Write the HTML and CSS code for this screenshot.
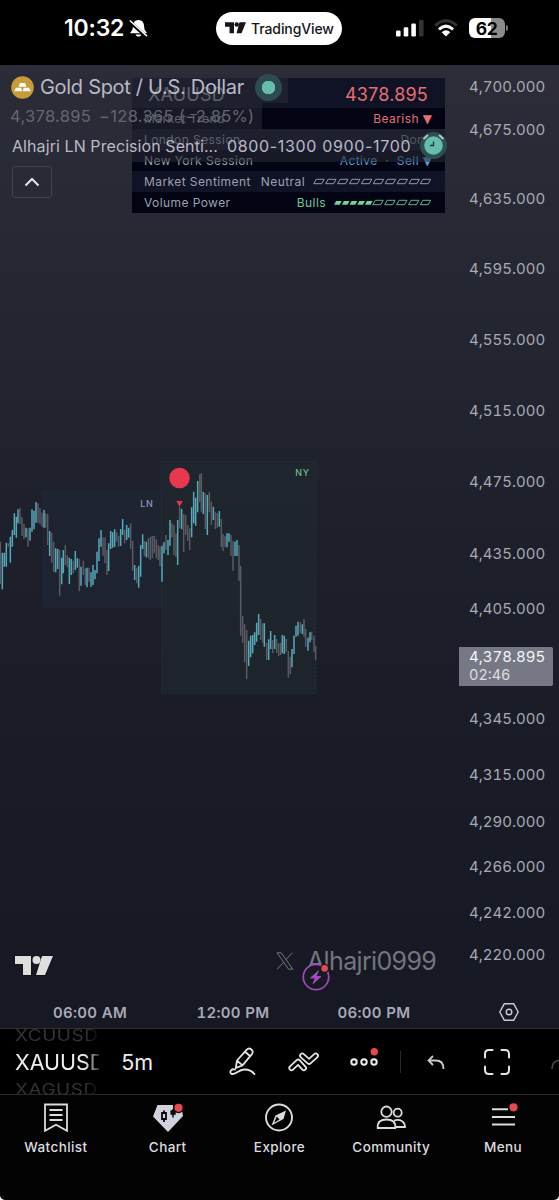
FILE: index.html
```html
<!DOCTYPE html>
<html lang="en">
<head>
<meta charset="utf-8">
<title>XAUUSD chart</title>
<link rel="stylesheet" href="styles.css">
</head>
<body>
<div class="phone">
  <header class="status">
    <div class="clock"><span class="time">10:32</span>
      <svg class="bell" viewBox="0 0 20 20"><path d="M10 1C6 1 4.300 4 4.100 7.500c-.1 3-.6 4.500-2.600 6.500v1h17v-1c-2-2-2.500-3.500-2.600-6.500C15.700 4 14 1 10 1zM7 16.200h6c-.5 3-5.500 3-6 0z" fill="#fff"/><path d="M-.2 2 19 19.200" stroke="#000" stroke-width="3.600"/><path d="M.8 1.500 19 18" stroke="#fff" stroke-width="1.500"/></svg>
    </div>
    <div class="island">
      <svg width="21" height="12" viewBox="0 0 42 23"><path d="M0 0h18v22H9V9H0zM29 0h13l-9 22H23z" fill="#15161c"/><circle cx="23.500" cy="4.500" r="4.500" fill="#15161c"/></svg>
      <span class="brand">TradingView</span>
    </div>
    <div class="signals">
      <svg width="28" height="18" viewBox="0 0 28 18"><g fill="#fff"><rect x="0" y="11.500" width="4.600" height="6" rx="1.300"/><rect x="7.700" y="8.200" width="4.600" height="9.300" rx="1.300"/><rect x="15.300" y="4.500" width="4.600" height="13" rx="1.300"/></g><rect x="23" y="1" width="4.600" height="16.500" rx="1.300" fill="#333"/></svg>
      <svg class="wifi" width="24" height="18" viewBox="0 0 24 18" fill="none"><path d="M1.200 6.600Q12-3.200 22.800 6.600" stroke="#333" stroke-width="3"/><path d="M4.900 10.300Q12 4 19.100 10.300" stroke="#fff" stroke-width="3"/><path d="M7.700 13.200Q12 9.300 16.300 13.200L12 17.500z" fill="#fff"/></svg>
      <div class="battery"><span>62</span></div>
    </div>
  </header>

  <main class="chart">
    <svg class="plot" viewBox="0 0 960 750">
      <rect x="130" y="126" width="355" height="346" class="zone ln"/>
      <rect x="485" y="34" width="463" height="696" class="zone ny"/>
      <path class="bar down" d="M1 275V402M25 280V290M60 173V222M66 202V258M72 222V268M84 235V290M114 160V218M120 175V222M126 188V230M137 190V233M143 192V285M155 248V338M161 275V366M179 300V437M196 285V345M202 316V352M220 332V370M238 327V424M250 332V375M256 355V405M267 353V395M309 262V317M315 262V340M321 300V375M350 247V275M356 257V290M374 240V280M392 220V297M398 273V362M410 353V400M433 273V318M445 265V325M451 260V330M457 258V325M463 258V310M469 268V325M475 285V330M480 290V348M498 255V300M516 220V262M522 225V315M528 250V320M539 170V235M551 193V305M557 195V255M563 225V272M569 235V300M599 73V155M604 70V185M616 130V237M628 127V187M634 155V225M646 185V237M652 190V233M664 207V292M669 252V303M675 258V292M693 255V318M699 272V362M717 285V392M722 347V557M728 498V578M734 523V637M740 540V688M782 507V570M788 520V578M800 578V630M818 570V610M830 567V608M836 580V618M842 578V615M859 567V605M865 603V683M871 620V673M901 517V550M912 508V560M917 537V590M935 545V570M942 557V605M947 587V630"/>
      <path class="bar up" d="M7 308V418M13 308V350M19 278V350M31 260V338M37 240V290M43 190V255M49 200V263M54 178V220M78 233V262M90 233V272M96 178V245M102 182V238M108 156V218M132 180V233M149 243V318M167 295V367M173 297V357M185 323V403M190 300V370M208 323V402M214 327V375M226 303V360M232 325V353M243 350V407M261 353V412M273 367V410M279 345V405M285 360V388M291 305V370M297 265V333M303 240V290M326 280V363M332 243V297M338 247V293M344 238V290M362 237V288M368 207V255M380 225V270M386 233V263M404 345V390M416 347V413M422 285V380M428 253V297M439 275V322M486 287V395M492 277V310M504 270V315M510 210V287M533 210V345M545 177V238M575 172V262M581 125V220M587 143V227M593 93V187M610 125V192M622 135V255M640 170V210M658 183V230M681 250V292M687 250V275M705 275V318M711 270V318M746 572V648M752 557V622M758 555V610M764 547V585M770 518V575M776 492V555M793 520V590M806 568V630M812 543V597M824 555V597M847 555V610M853 557V612M876 597V652M882 557V612M888 527V560M894 515V557M907 523V552M924 563V602M930 547V577"/>
      <circle cx="538.500" cy="84" r="31" fill="#e8384f"/>
      <path d="M529 153h19l-9.500 17z" fill="#e8384f"/>
      <text x="421" y="171" class="zt" fill="#8d9bbd">LN</text>
      <text x="886" y="79" class="zt" fill="#78b892">NY</text>
    </svg>

    <div class="panel">
      <div class="prow head"><span>XAUUSD</span><span class="red">4378.895</span></div>
      <div class="prow dark"><span>Market Trend</span><span class="red">Bearish <i>▼</i></span></div>
      <div class="prow"><span>London Session</span><span class="done">Done</span></div>
      <div class="prow dark"><span>New York Session</span><span class="blue">Active &nbsp;·&nbsp; Sell <i>▼</i></span></div>
      <div class="prow"><span>Market Sentiment</span><span class="meter">Neutral
        <svg width="118" height="7" viewBox="0 0 118 7"><defs><path id="cell" d="M3.300 1.300h7.900L8.700 5.700H.8z"/></defs><g fill="none" stroke="#a3a5b0" stroke-width=".9"><use href="#cell"/><use href="#cell" x="11.900"/><use href="#cell" x="23.800"/><use href="#cell" x="35.700"/><use href="#cell" x="47.600"/><use href="#cell" x="59.500"/><use href="#cell" x="71.400"/><use href="#cell" x="83.300"/><use href="#cell" x="95.200"/><use href="#cell" x="106.500"/></g></svg></span></div>
      <div class="prow dark"><span>Volume Power</span><span class="meter green">Bulls
        <svg width="97" height="7" viewBox="0 0 97 7"><g fill="#73d49b"><path d="M2.100 2H7.700L5.700 5.800H.1z"/><path id="full" d="M9.900 2h5.600l-2 3.800H7.900z"/><use href="#full" x="7.700"/><use href="#full" x="15.400"/><use href="#full" x="23.100"/></g><g fill="none" stroke="#73c497" stroke-width=".9"><use href="#cell" x="38"/><use href="#cell" x="49.900"/><use href="#cell" x="61.800"/><use href="#cell" x="73.700"/><use href="#cell" x="85.500"/></g></svg></span></div>
    </div>

    <section class="legend">
      <div class="lrow title">
        <svg class="gold" width="23" height="23" viewBox="0 0 23 23"><circle cx="11.500" cy="11.500" r="11.300" fill="#c99a38"/><path d="M9 7h5l1.500 3.700h-8zM5 11.700h5.200l1 3.600H3.200zM12.700 11.700H18l1.800 3.600h-8z" fill="#fff"/></svg>
        <span class="name">Gold Spot / U.S. Dollar</span><span class="live"></span>
      </div>
      <div class="lrow quote"><span>4,378.895</span><span>−128.365 (−2.85%)</span></div>
      <div class="lrow study"><span class="sname">Alhajri LN Precision Senti...</span><span class="hours">0800-1300 0900-1700</span>
        <svg class="alarm" width="27" height="27" viewBox="0 0 27 27"><circle cx="13.500" cy="13.500" r="13.500" fill="#2b4f53"/><circle cx="13.500" cy="13.500" r="9.300" fill="#66bda9"/><path d="M3.500 7 8 3M19 3l4.500 4" stroke="#b9c5c8" stroke-width="2"/><path d="M13.500 9.500v4h-3.500" fill="none" stroke="#234" stroke-width="1.300"/></svg></div>
      <button class="collapse"><svg width="16" height="10" viewBox="0 0 16 10"><path d="m1.500 8.500 6.500-6.500 6.500 6.500" fill="none" stroke="#e4e5ea" stroke-width="2"/></svg></button>
    </section>

    <div class="axis">
      <span style="top:87px">4,700.000</span><span style="top:130px">4,675.000</span><span style="top:199px">4,635.000</span><span style="top:269px">4,595.000</span><span style="top:340px">4,555.000</span><span style="top:411px">4,515.000</span><span style="top:482px">4,475.000</span><span style="top:554px">4,435.000</span><span style="top:609px">4,405.000</span><span style="top:719px">4,345.000</span><span style="top:775px">4,315.000</span><span style="top:822px">4,290.000</span><span style="top:867px">4,266.000</span><span style="top:913px">4,242.000</span><span style="top:955px">4,220.000</span>
      <div class="last"><b>4,378.895</b><em>02:46</em></div>
    </div>

    <svg class="logo" viewBox="0 0 42 24"><path d="M2 2h16v19h-8V10H2zM29 2h11l-8 19h-9z" fill="#dedede" stroke="#111216" stroke-width="2" paint-order="stroke"/><circle cx="23.500" cy="6" r="4" fill="#dedede"/></svg>
    <div class="mark"><svg width="18" height="18" viewBox="0 0 18 18" fill="none" stroke="#777880"><path d="M1 .8h4.200l11.600 16.400h-4.200zM16.300.8 10 7.600M7.700 10.200 1 17.200"/></svg><span>Alhajri0999</span></div>
    <svg class="flash" viewBox="0 0 28 28"><circle cx="14" cy="14" r="12.700" fill="#171923" stroke="#a24cba" stroke-width="1.700"/><path d="m16.500 7.800-8 7.200h5L11 20.700l8-7.200h-5z" fill="#a24cba" stroke="#b34ccc" stroke-width=".8" stroke-linejoin="round"/><circle cx="22.600" cy="5.400" r="4.700" fill="#171923"/><circle cx="22.600" cy="5.400" r="3.300" fill="#e5484f"/></svg>

    <footer class="times"><span>06:00 AM</span><span>12:00 PM</span><span>06:00 PM</span>
      <svg width="20" height="18" viewBox="0 0 20 18" fill="none" stroke="#c9cad0" stroke-width="1.400"><path d="M5.300.8h9.400L19.200 9l-4.500 8.200H5.300L.8 9z"/><circle cx="10" cy="9" r="2.800"/></svg></footer>
  </main>

  <section class="toolbar">
    <div class="wheel"><span class="dim">XCUUSD</span><span class="current">XAUUSD</span><span class="dim">XAGUSD</span></div>
    <span class="interval">5m</span>
    <svg class="t-pen" width="28" height="30" viewBox="0 0 28 30" fill="none" stroke="#e4e4e6" stroke-width="1.800" stroke-linecap="round" stroke-linejoin="round"><path d="m8 13.500 9.500-10.700c3-3.200 8.200.8 5.400 4.300L13.500 18.300 6.800 21zM8 13.700l5.300 4.400M16 4.800l5.300 4.400M6 22.500c-3.500-1-5.500 1.800-4.200 3.800 3 3.200 7.500-3.600 13.200-3.800 5-.2 8 1.500 10.500 4.600"/></svg>
    <svg class="t-pattern" width="31" height="20" viewBox="0 0 31 20" fill="none" stroke-linecap="round" stroke-linejoin="round"><path d="m14.300 3.700 6.800 6 6.600-6" stroke="#e4e4e6" stroke-width="6.200"/><path d="m14.300 3.700 6.800 6 6.600-6" stroke="#000" stroke-width="2.600"/><path d="m3.500 16 6.700-6.200 5.600 6.200" stroke="#e4e4e6" stroke-width="6.200"/><path d="m3.500 16 6.700-6.200 5.600 6.200" stroke="#000" stroke-width="2.600"/></svg>
    <svg class="t-more" width="29" height="19" viewBox="0 0 29 19"><g fill="none" stroke="#eee" stroke-width="2"><circle cx="4" cy="14" r="2.700"/><circle cx="14" cy="14" r="2.700"/><circle cx="24" cy="14" r="2.700"/></g><circle cx="24.300" cy="3.800" r="3.700" fill="#e5484f"/></svg>
    <i class="divider"></i>
    <svg class="t-undo" width="18" height="15" viewBox="0 0 18 15" fill="none" stroke="#c9cacf" stroke-width="1.800"><path d="M6 1 1.500 5.500 6 10M1.500 5.500H9c5 0 7.500 3 7.500 8.500"/></svg>
    <svg class="t-full" width="26" height="26" viewBox="0 0 26 26" fill="none" stroke="#e4e4e6" stroke-width="2" stroke-linecap="round"><path d="M1 8.500V5q0-4 4-4h3.500M17.500 1H21q4 0 4 4v3.500M25 17.500V21q0 4-4 4h-3.500M8.500 25H5q-4 0-4-4v-3.500"/></svg>
    <svg class="t-redo" width="8" height="10" viewBox="0 0 8 10" fill="none" stroke="#4d4d50" stroke-width="1.500"><path d="M1 10C1 5 3 1.800 8 1.200"/></svg>
  </section>

  <nav class="nav">
    <a><svg width="30" height="30" viewBox="0 0 30 30" fill="none" stroke="#dcdce0" stroke-width="1.800"><path d="M4 2.500h22v26.300l-11-6-11 6zM8.500 8h13M8.500 13h13M8.500 18h13"/></svg><span>Watchlist</span></a>
    <a><svg width="32" height="30" viewBox="0 0 32 30"><path d="M5.500 3h15.500v5h9l1 6L16 30 1 14.500z" fill="#d2d2df"/><path d="M10 11h4v6h-4zM12 8.500V11M12 17v3" fill="none" stroke="#08080a" stroke-width="1.800"/><path d="M21 7v8.500M19.200 9h3.800v3h-3.800z" fill="#08080a" stroke="#08080a" stroke-width="1.500"/><circle cx="26.500" cy="5.800" r="5.400" fill="#040404"/><circle cx="26.500" cy="5.800" r="4.100" fill="#e5484f"/></svg><span>Chart</span></a>
    <a><svg width="30" height="30" viewBox="0 0 30 30"><circle cx="15" cy="15.500" r="13" fill="none" stroke="#dcdce0" stroke-width="1.900"/><path d="M22 8.500 19.500 17l-12 6.500L11.500 13.500z" fill="#dcdce0"/><path d="m12.800 14.500-2.600 6.300 5.300-3.400z" fill="#050505"/></svg><span>Explore</span></a>
    <a><svg width="32" height="30" viewBox="0 0 32 30" fill="none" stroke="#dcdce0" stroke-width="1.800"><circle cx="11.500" cy="9.700" r="5.200"/><circle cx="22.700" cy="10.700" r="4"/><path d="M2.700 26c-.5-6 2.800-8.500 8.800-8.500s9.300 2.500 8.800 8.500zM19 18.500c6-2 11 1 11 6.500h-9"/></svg><span>Community</span></a>
    <a><svg width="32" height="30" viewBox="0 0 32 30"><path d="M5 7.300h16M5 15h23M5 22.500h23" stroke="#dcdce0" stroke-width="1.900"/><circle cx="26.500" cy="5.300" r="4.100" fill="#e5484f"/></svg><span>Menu</span></a>
  </nav>
</div>
</body>
</html>
```

FILE: styles.css
```css
* { box-sizing: border-box; }
body { margin: 0; background: #fff; font-family: Inter, "Liberation Sans", sans-serif; }
svg { display: block; flex: none; }
.phone { width: 559px; height: 1200px; overflow: hidden; display: flex; flex-direction: column; background: #030303; border-radius: 0 0 5px 5px; }

.status { height: 65px; flex: none; background: #000; display: flex; align-items: center; padding-bottom: 9px; color: #fff; }
.clock { width: 216px; display: flex; align-items: center; padding-left: 64px; gap: 4px; }
.time { font-size: 23px; font-weight: 600; letter-spacing: -.2px; width: 61px; white-space: nowrap; }
.bell { width: 19px; height: 19px; }
.island { width: 126px; height: 33px; border-radius: 17px; background: #fff; display: flex; align-items: center; padding-left: 9px; gap: 5px; color: #15161c; }
.brand { font-size: 14px; font-weight: 500; letter-spacing: -.1px; }
.signals { display: flex; align-items: center; padding-left: 54px; gap: 10px; }
.battery { width: 36px; height: 20px; margin-left: 1px; border-radius: 6px; background: linear-gradient(90deg, #fff 62%, #8b8b8b 62%); display: flex; justify-content: center; align-items: center; color: #000; font-size: 17.500px; font-weight: 700; letter-spacing: -.4px; position: relative; padding-right: 1px; }
.battery::after { content: ""; position: absolute; left: 37px; top: 7px; width: 2px; height: 6px; background: #777; border-radius: 0 2px 2px 0; }

.chart { position: relative; height: 963px; flex: none; background: linear-gradient(#2c2d38, #242632 25%, #1d1f2a 50%, #181a26 80%, #161824); }
.plot { position: absolute; left: 0; top: 385px; width: 320px; height: 250px; }
.zone { stroke-width: 2; stroke-dasharray: 7 5; }
.ln { fill: #1d2737; fill-opacity: .5; stroke: #28364b; }
.ny { fill: #202a2e; fill-opacity: .6; stroke: #2b3b3d; }
.bar { fill: none; stroke-width: 4.500; }
.up { stroke: #56a9b9; }
.down { stroke: #595a64; }
.zt { font-size: 27px; font-weight: 500; letter-spacing: 1.500px; }

.panel { position: absolute; left: 132px; top: 13px; width: 313px; color: #9fa1ad; font-size: 12px; letter-spacing: .42px; }
.prow { height: 21px; background: #101326; padding: 0 13px 0 12px; display: flex; align-items: center; justify-content: space-between; white-space: pre; }
.prow.dark { background: #020414; }
.prow.head { height: 30px; padding: 2px 17px 0 16px; font-size: 18px; letter-spacing: .2px; }
.prow i { font-style: normal; font-family: "DejaVu Sans", sans-serif; font-size: 12px; letter-spacing: 0; }
.red { color: #e66f73; } .blue { color: #5b9fda; } .green { color: #73c497; } .done { color: #85868e; }
.meter { display: flex; align-items: center; gap: 8px; white-space: nowrap; padding-right: 1px; }

.legend { position: relative; display: flex; flex-direction: column; align-items: flex-start; padding-top: 9px; width: 447px; }
.lrow { display: flex; align-items: center; white-space: nowrap; background: rgba(42, 43, 54, .55); }
.title { height: 29px; padding: 0 0 3px 11px; width: 288px; }
.name { font-size: 20px; color: #b9bac4; width: 211px; margin-left: 6px; letter-spacing: -.3px; }
.live { width: 27px; height: 27px; border-radius: 50%; margin-left: 4px; background: radial-gradient(circle, #66bda9 6.500px, #2d4b50 7px); }
.quote { height: 26px; padding-left: 10px; width: 262px; gap: 8px; font-size: 16.500px; color: #656671; letter-spacing: .3px; }
.study { height: 33px; padding-left: 12px; width: 447px; font-size: 16px; color: #b9bac4; }
.sname { width: 215px; letter-spacing: .08px; }
.hours { width: 193px; letter-spacing: .66px; }
.collapse { margin: 4px 0 0 12px; width: 40px; height: 32px; padding: 0; border: 1px solid #42434d; border-radius: 3px; background: transparent; display: flex; align-items: center; justify-content: center; }

.axis { position: absolute; right: 0; top: -65px; width: 101px; height: 1028px; color: #a8a9b3; font-size: 15px; letter-spacing: 0; font-variant-numeric: tabular-nums; }
.axis > span { position: absolute; left: 11px; line-height: 20px; margin-top: -10px; }
.last { position: absolute; left: 1px; top: 647px; width: 94px; height: 39px; padding: 1px 10px; background: #767985; border-radius: 0 2px 2px 0; display: flex; flex-direction: column; line-height: 18px; color: #f5f5f7; }
.last b { font-weight: 400; }
.last em { font-style: normal; font-size: 14.500px; color: #dddde2; }

.logo { position: absolute; left: 13px; top: 889px; width: 42px; height: 24px; }
.mark { position: absolute; left: 276px; top: 881px; display: flex; align-items: center; gap: 13px; font-size: 25px; line-height: 30px; color: #74757d; letter-spacing: -.65px; }
.flash { position: absolute; left: 302px; top: 898px; width: 28px; height: 28px; }
.times { position: absolute; left: 0; right: 0; bottom: 6px; height: 20px; display: flex; align-items: center; padding-left: 53px; color: #a8a9b5; font-size: 15px; font-weight: 600; letter-spacing: .3px; font-variant-numeric: tabular-nums; }
.times span { width: 143.500px; white-space: nowrap; }
.times span:nth-child(2) { width: 141px; }
.times span:nth-child(3) { width: 161.500px; }

.toolbar { height: 67px; flex: none; border-top: 1px solid #303033; border-bottom: 1px solid #29292b; background: #000; display: flex; align-items: center; overflow: hidden; color: #eee; }
.wheel { width: 86px; margin-left: 15px; height: 65px; padding-top: 2px; display: flex; flex-direction: column; justify-content: center; overflow: hidden; -webkit-mask-image: linear-gradient(90deg, #000 70px, transparent 88px); mask-image: linear-gradient(90deg, #000 70px, transparent 88px); }
.wheel span { height: 27px; line-height: 27px; flex: none; font-size: 21.500px; white-space: nowrap; }
.wheel .dim { color: #333336; font-size: 19px; letter-spacing: .5px; transform: scaleY(.8); }
.interval { width: 110px; margin-left: 22px; padding-top: 1px; font-size: 21.500px; }
.t-pattern { margin-left: 31px; }
.t-more { margin: -9px 0 0 31px; }
.divider { width: 1px; height: 22px; background: #29292c; margin-left: 21px; }
.t-undo { margin-left: 26px; margin-top: 2px; }
.t-full { margin-left: 39px; }
.t-redo { margin-left: 41px; margin-top: 5px; }

.nav { flex: 1; display: grid; grid-template-columns: repeat(5, 1fr); padding-top: 7px; color: #dcdce0; }
.nav a { display: flex; flex-direction: column; align-items: center; gap: 6px; font-size: 13.500px; font-weight: 500; line-height: 18px; letter-spacing: .4px; }
```
